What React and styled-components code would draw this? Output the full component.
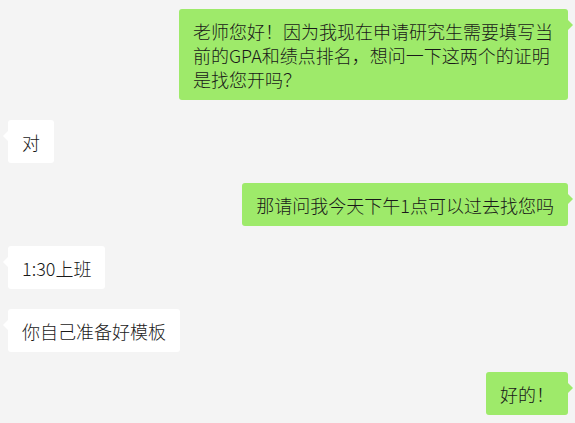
import React from 'react'
import styled, { createGlobalStyle } from 'styled-components'

const GlobalStyle = createGlobalStyle`
  html, body {
    margin: 0;
    padding: 0;
    background: #f4f4f4;
  }
  body {
    font-family: "Microsoft YaHei", "Noto Sans CJK SC", sans-serif;
  }
`

const Chat = styled.div`
  width: 575px;
  height: 423px;
  box-sizing: border-box;
  padding: 9px 7px 0 8px;
  display: flex;
  flex-direction: column;
  gap: 20px;
  background: #f4f4f4;
  overflow: hidden;
`

const Row = styled.div`
  display: flex;
  justify-content: ${p => (p.mine ? 'flex-end' : 'flex-start')};
`

const Bubble = styled.div`
  position: relative;
  box-sizing: border-box;
  max-width: 389px;
  padding: 10px 14px 9px 14px;
  border-radius: 3px;
  background: ${p => (p.mine ? '#9eea6a' : '#ffffff')};
  color: #191919;
  font-size: 18px;
  font-weight: 300;
  line-height: 24px;
  word-break: break-all;

  &::after {
    content: '';
    position: absolute;
    top: 11px;
    width: 0;
    height: 0;
    border-top: 5px solid transparent;
    border-bottom: 5px solid transparent;
    ${p =>
      p.mine
        ? 'right: -5px; border-left: 5px solid #9eea6a;'
        : 'left: -5px; border-right: 5px solid #ffffff;'}
  }
`

const messages = [
  {
    mine: true,
    text: '老师您好！因为我现在申请研究生需要填写当前的GPA和绩点排名，想问一下这两个的证明是找您开吗？',
  },
  { mine: false, text: '对' },
  { mine: true, text: '那请问我今天下午1点可以过去找您吗' },
  { mine: false, text: '1:30上班' },
  { mine: false, text: '你自己准备好模板' },
  { mine: true, text: '好的！' },
]

export default function App() {
  return (
    <>
      <GlobalStyle />
      <Chat>
        {messages.map((m, i) => (
          <Row key={i} mine={m.mine}>
            <Bubble mine={m.mine}>{m.text}</Bubble>
          </Row>
        ))}
      </Chat>
    </>
  )
}
